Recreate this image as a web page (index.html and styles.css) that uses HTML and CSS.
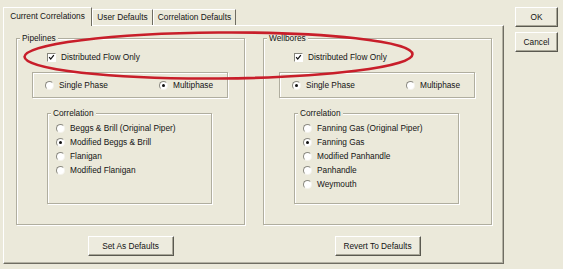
FILE: index.html
```html
<!DOCTYPE html>
<html>

<head>
    <title>Correlations</title>
    <link rel="stylesheet" href="styles.css">
</head>

<body>

    <div class="window">
        <div class="main">
            <div class="tabs">
                <div class="tab tab-active">Current Correlations</div>
                <div class="tab tab-user">User Defaults</div>
                <div class="tab tab-corr">Correlation Defaults</div>
            </div>

            <div class="panel">
                <div class="column">
                    <div class="group">
                        <span class="group-title">Pipelines</span>
                        <div class="check-row">
                            <span class="check">
                                <svg width="9" height="9" viewBox="0 0 9 9"><polyline points="1.5,4 3.5,6.5 7.5,1.5" fill="none" stroke="#111" stroke-width="1.6"/></svg>
                            </span>
                            Distributed Flow Only
                        </div>
                        <div class="phase">
                            <div class="option"><span class="radio"></span>Single Phase</div>
                            <div class="option"><span class="radio radio-on"></span>Multiphase</div>
                        </div>
                        <div class="corr">
                            <span class="group-title">Correlation</span>
                            <div class="corr-list">
                                <div class="option"><span class="radio"></span>Beggs &amp; Brill (Original Piper)</div>
                                <div class="option"><span class="radio radio-on"></span>Modified Beggs &amp; Brill</div>
                                <div class="option"><span class="radio"></span>Flanigan</div>
                                <div class="option"><span class="radio"></span>Modified Flanigan</div>
                            </div>
                        </div>
                    </div>
                    <div class="button-row">
                        <button class="btn btn-wide">Set As Defaults</button>
                    </div>
                </div>

                <div class="column">
                    <div class="group">
                        <span class="group-title">Wellbores</span>
                        <div class="check-row">
                            <span class="check">
                                <svg width="9" height="9" viewBox="0 0 9 9"><polyline points="1.5,4 3.5,6.5 7.5,1.5" fill="none" stroke="#111" stroke-width="1.6"/></svg>
                            </span>
                            Distributed Flow Only
                        </div>
                        <div class="phase">
                            <div class="option"><span class="radio radio-on"></span>Single Phase</div>
                            <div class="option"><span class="radio"></span>Multiphase</div>
                        </div>
                        <div class="corr">
                            <span class="group-title">Correlation</span>
                            <div class="corr-list">
                                <div class="option"><span class="radio"></span>Fanning Gas (Original Piper)</div>
                                <div class="option"><span class="radio radio-on"></span>Fanning Gas</div>
                                <div class="option"><span class="radio"></span>Modified Panhandle</div>
                                <div class="option"><span class="radio"></span>Panhandle</div>
                                <div class="option"><span class="radio"></span>Weymouth</div>
                            </div>
                        </div>
                    </div>
                    <div class="button-row">
                        <button class="btn btn-wide">Revert To Defaults</button>
                    </div>
                </div>
            </div>
        </div>

        <div class="side">
            <button class="btn btn-small">OK</button>
            <button class="btn btn-small">Cancel</button>
        </div>
    </div>

    <svg class="highlight" width="563" height="269" viewBox="0 0 563 269">
        <ellipse cx="218.5" cy="55.5" rx="194" ry="23" transform="rotate(-0.4 218.5 55.5)" fill="none" stroke="#c81e2a" stroke-width="2.6"/>
    </svg>

</body>

</html>
```

FILE: styles.css
```css
body {
    margin: 0;
    background: #ebe9da;
    font-family: 'Liberation Sans', Arial, sans-serif;
    font-size: 8.3px;
    color: #141414;
    width: 563px;
    height: 269px;
    overflow: hidden;
    position: relative;
}

.window {
    display: flex;
    padding: 7px 0 0 3px;
}

.main {
    width: 501px;
}

/* tabs */

.tabs {
    display: flex;
    height: 18px;
    align-items: flex-end;
}

.tab {
    box-sizing: border-box;
    height: 16px;
    line-height: 14px;
    text-align: center;
    border-top: 1px solid #fff;
    border-left: 1px solid #fff;
    border-right: 1px solid #6f6d62;
    white-space: nowrap;
}

.tab-active {
    width: 89px;
    height: 19px;
    line-height: 17px;
    margin-bottom: -1px;
    position: relative;
    z-index: 1;
    background: #ebe9da;
}

.tab-user {
    width: 61px;
}

.tab-corr {
    width: 83px;
}

/* panel */

.panel {
    box-sizing: border-box;
    width: 501px;
    height: 239px;
    display: flex;
    gap: 18px;
    padding: 0 11px 0 12px;
    border: 1px solid;
    border-color: #fff #6f6d62 #6f6d62 #fff;
    box-shadow: inset -1px -1px 0 #b3b1a3;
}

.column {
    width: 229px;
}

.group {
    box-sizing: border-box;
    height: 187px;
    margin-top: 12px;
    border: 1px solid #b0ae9f;
    box-shadow: inset 1px 1px 0 #fff, 1px 1px 0 #fff;
}

.group-title {
    display: block;
    width: fit-content;
    height: 10px;
    line-height: 10px;
    margin: -6px 0 0 3px;
    padding: 0 2px;
    background: #ebe9da;
}

.check-row {
    display: flex;
    align-items: center;
    height: 10px;
    margin: 9px 0 0 30px;
}

.check {
    box-sizing: border-box;
    width: 9px;
    height: 9px;
    margin-right: 5px;
    background: #fff;
    border: 1px solid;
    border-color: #85847a #fff #fff #85847a;
    display: flex;
    align-items: center;
    justify-content: center;
}

.check svg {
    width: 7px;
    height: 7px;
}

.phase {
    box-sizing: border-box;
    width: 196px;
    height: 26px;
    margin: 10px 0 0 15px;
    padding-left: 12px;
    display: grid;
    grid-template-columns: 114px auto;
    align-items: center;
    border: 1px solid #b0ae9f;
    box-shadow: inset 1px 1px 0 #fff, 1px 1px 0 #fff;
}

.corr {
    box-sizing: border-box;
    width: 165px;
    height: 91px;
    margin: 15px 0 0 30px;
    border: 1px solid #b0ae9f;
    box-shadow: inset 1px 1px 0 #fff, 1px 1px 0 #fff;
}

.corr-list {
    margin: 3px 0 0 8px;
}

.option {
    display: flex;
    align-items: center;
    height: 14px;
    white-space: nowrap;
}

.radio {
    box-sizing: border-box;
    width: 9px;
    height: 9px;
    margin-right: 5px;
    border-radius: 50%;
    background: #fff;
    border: 1px solid;
    border-color: #8b8a80 #f4f3ec #f4f3ec #8b8a80;
    display: flex;
    align-items: center;
    justify-content: center;
}

.radio-on::after {
    content: "";
    width: 3px;
    height: 3px;
    border-radius: 50%;
    background: #111;
}

/* buttons */

.button-row {
    display: flex;
    justify-content: center;
    margin-top: 11px;
}

.btn {
    box-sizing: border-box;
    height: 20px;
    padding: 0;
    font-family: inherit;
    font-size: 8.3px;
    color: #141414;
    background: #edebde;
    border: 1px solid;
    border-color: #fff #5a5950 #5a5950 #fff;
    box-shadow: inset -1px -1px 0 #a9a798;
}

.btn-wide {
    width: 86px;
}

.btn-small {
    width: 43px;
}

.side {
    display: flex;
    flex-direction: column;
    gap: 5px;
    margin-left: 11px;
}

.highlight {
    position: absolute;
    left: 0;
    top: 0;
    pointer-events: none;
}
```
